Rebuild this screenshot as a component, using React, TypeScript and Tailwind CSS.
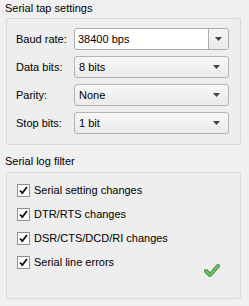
const font = { fontFamily: '"Liberation Sans", Arial, sans-serif' };

const rows = [
    { label: "Baud rate:", value: "38400 bps", editable: true },
    { label: "Data bits:", value: "8 bits" },
    { label: "Parity:", value: "None" },
    { label: "Stop bits:", value: "1 bit" },
];

const filters = [
    "Serial setting changes",
    "DTR/RTS changes",
    "DSR/CTS/DCD/RI changes",
    "Serial line errors",
];

function Arrow() {
    return (
        <svg width="8" height="4" viewBox="0 0 8 4">
            <path d="M0 0H7L3.5 4Z" fill="#444" />
        </svg>
    );
}

function Combo({ value, editable }: { value: string; editable?: boolean }) {
    if (editable) {
        return (
            <div className="flex h-[22px] w-[155px] rounded-[3px] border border-[#adadad] bg-white">
                <div className="flex flex-1 items-center pl-[3px] text-black">{value}</div>
                <div className="flex w-[20px] items-center justify-center rounded-r-[3px] border-l border-[#adadad] bg-gradient-to-b from-[#f6f6f6] to-[#e9e9e9]">
                    <Arrow />
                </div>
            </div>
        );
    }
    return (
        <div className="flex h-[22px] w-[155px] items-center rounded-[3px] border border-[#b4b4b4] bg-gradient-to-b from-[#f7f7f7] to-[#ebebeb] pl-[4px] pr-[7px]">
            <span className="flex-1 text-black">{value}</span>
            <Arrow />
        </div>
    );
}

function Check() {
    return (
        <div className="flex h-[13px] w-[13px] items-center justify-center border border-[#8e8f8f] bg-white">
            <svg width="9" height="9" viewBox="0 0 9 9">
                <path d="M1 4.5L3.3 7L8 1" fill="none" stroke="#111" strokeWidth="1.8" />
            </svg>
        </div>
    );
}

export default function App() {
    return (
        <div className="h-[306px] w-[249px] bg-[#f0f0f0] text-[11px] leading-[13px] text-black" style={font}>
            <div className="pl-[5px] pt-[2px]">Serial tap settings</div>
            <div className="ml-[6px] mt-[3px] flex w-[235px] flex-col gap-[6px] rounded-[2px] border border-[#d9d9d9] bg-[#eeeeee] pb-[10px] pl-[9px] pt-[9px]">
                {rows.map((r) => (
                    <div key={r.label} className="flex items-center">
                        <span className="w-[58px]">{r.label}</span>
                        <Combo value={r.value} editable={r.editable} />
                    </div>
                ))}
            </div>
            <div className="pl-[5px] pt-[10px]">Serial log filter</div>
            <div className="relative ml-[6px] mt-[4px] flex h-[127px] w-[235px] flex-col gap-[11px] rounded-[2px] border border-[#d9d9d9] bg-[#eeeeee] pl-[10px] pt-[11px]">
                {filters.map((f) => (
                    <div key={f} className="flex items-center gap-[4px]">
                        <Check />
                        <span>{f}</span>
                    </div>
                ))}
                <svg className="absolute left-[197px] top-[91px]" width="16" height="13" viewBox="0 0 16 13">
                    <path d="M2 7L6 11L14 2" fill="none" stroke="#3d923d" strokeWidth="4" strokeLinejoin="round" strokeLinecap="round" />
                    <path d="M2 7L6 11L14 2" fill="none" stroke="#6cc26a" strokeWidth="2.2" strokeLinejoin="round" strokeLinecap="round" />
                </svg>
            </div>
        </div>
    );
}
